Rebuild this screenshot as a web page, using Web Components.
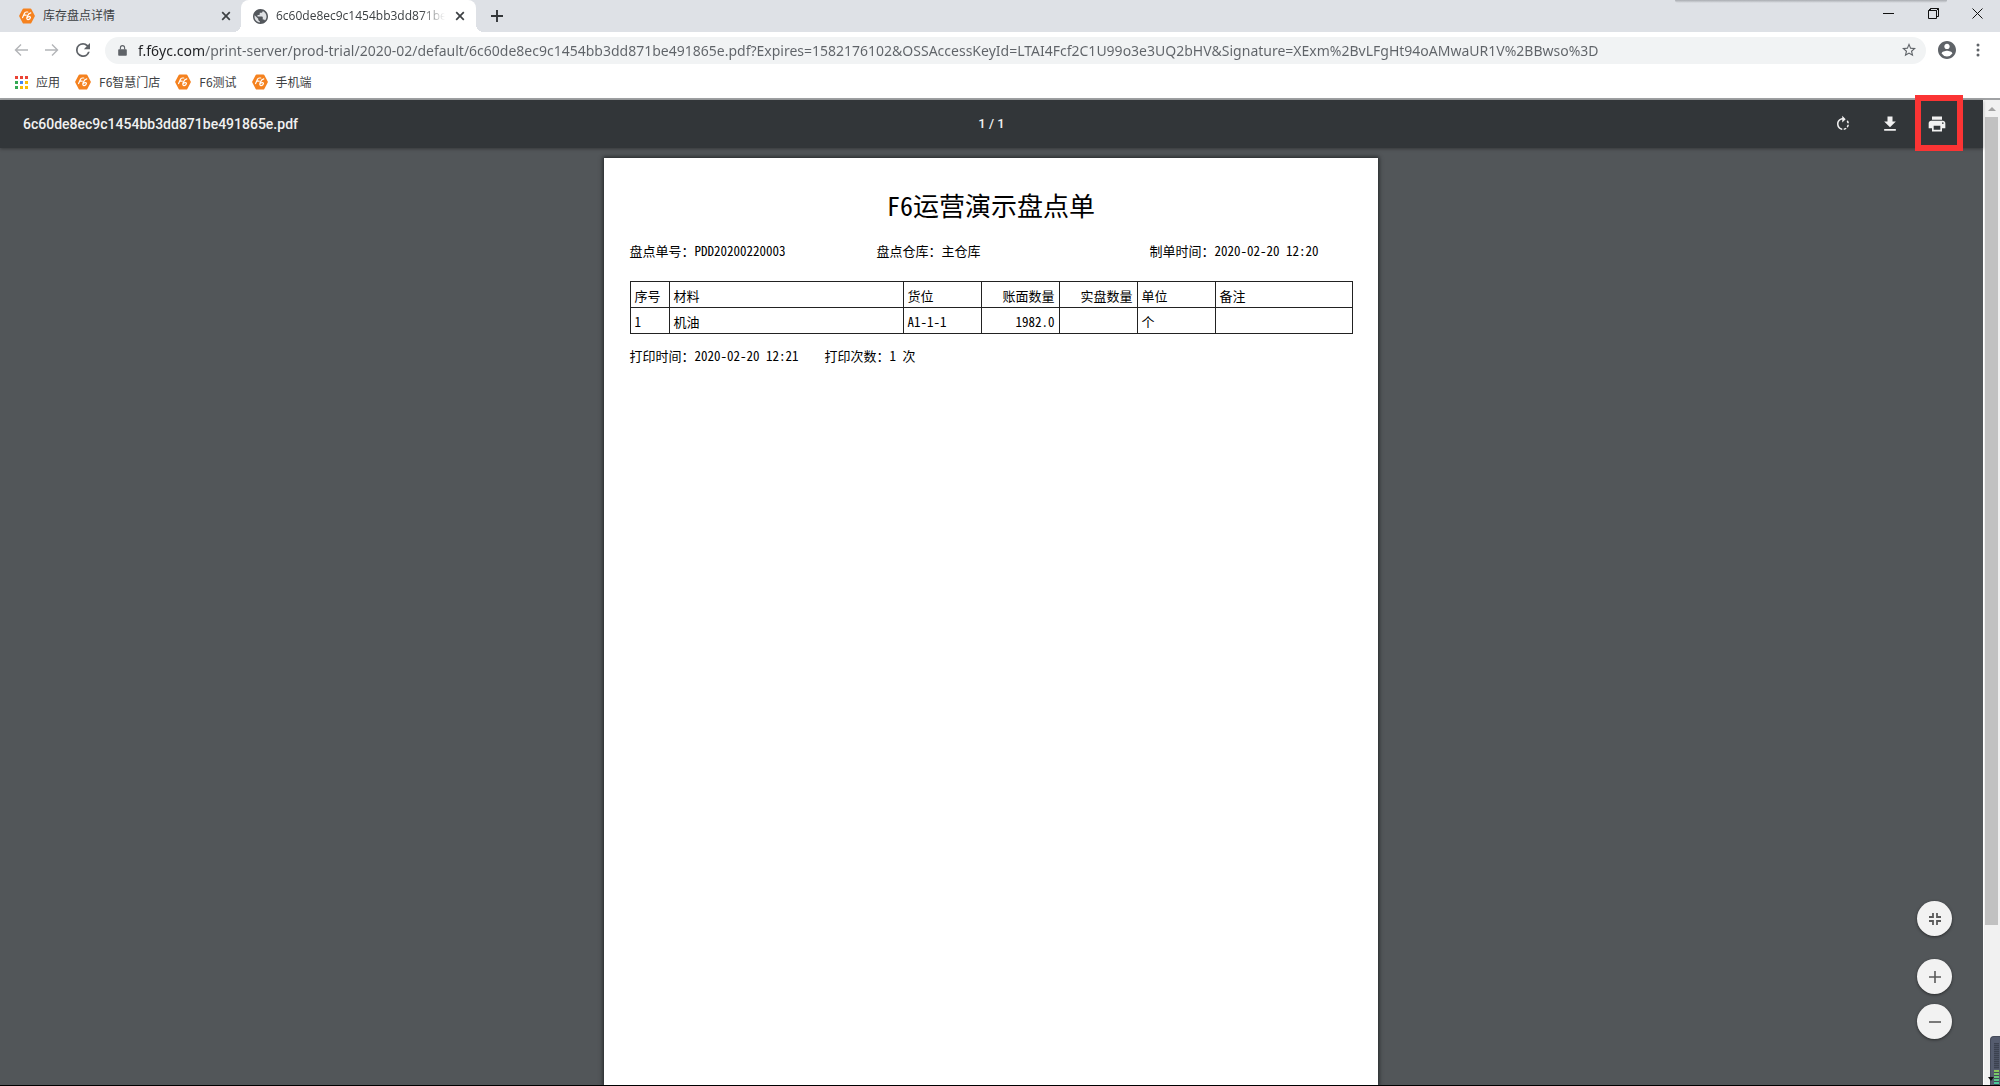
<!DOCTYPE html>
<html lang="zh-CN">
<head>
<meta charset="utf-8">
<title>6c60de8ec9c1454bb3dd871be491865e.pdf</title>
<style>
html, body { height: 100%; }
body { margin: 0; overflow: hidden; font-family: "Open Sans", "Noto Sans CJK SC", sans-serif; font-size: 12px; color: #3c4043; }
</style>
</head>
<body>
<browser-window></browser-window>
<script>
const F6 = `<svg viewBox="0 0 16 16" width="16" height="16" aria-hidden="true"><path fill="#f5821f" d="M4.6.4h6.8a1 1 0 0 1 .9.5l3.300 6.400a1.200 1.200 0 0 1 0 1.400l-3.300 6.400a1 1 0 0 1-.9.5H4.600a1 1 0 0 1-.9-.5L.4 8.700a1.200 1.200 0 0 1 0-1.400L3.700.9a1 1 0 0 1 .9-.5z"/><g fill="none" stroke="#fff" stroke-width="1.200" stroke-linecap="round" stroke-linejoin="round"><path d="M3.600 9.600 5.400 5.400C5.800 4.500 6.300 4.200 7.400 4h1.400M4.700 7.200h2.500"/><path d="M11.800 4.900c-1.700.4-2.900 1.800-3.700 3.800-.5 1.400-.4 2.800.8 2.900 1.200.1 2.300-.8 2.500-1.900.2-1.200-1.500-1.500-2.900-.4"/></g></svg>`;

function define(name, css, html) {
  const t = document.createElement('template');
  t.innerHTML = `<style>*,*::before,*::after{box-sizing:border-box}button{border:0;background:none;padding:0;margin:0;font:inherit;color:inherit;display:flex;align-items:center;justify-content:center;flex:none}svg{display:block;flex:none}${css}</style>${html}`;
  customElements.define(name, class extends HTMLElement {
    constructor() {
      super();
      this.attachShadow({ mode: 'open' }).append(t.content.cloneNode(true));
    }
  });
}

define('f6-logo', `:host{display:block;width:16px;height:16px;flex:none}`, F6);

define('browser-tab', `
:host{display:flex;align-items:center;height:32px;width:241px;padding:0 8px 0 19px;gap:8px;color:#3c4043;flex:none}
:host([active]){width:235px;padding:0 9px 0 12px;background:#fff;border-radius:8px 8px 0 0;position:relative}
:host([active])::before,:host([active])::after{content:"";position:absolute;bottom:0;width:8px;height:8px}
:host([active])::before{left:-8px;background:radial-gradient(circle at 0 0,transparent 8px,#fff 8px)}
:host([active])::after{right:-8px;background:radial-gradient(circle at 100% 0,transparent 8px,#fff 8px)}
.t{flex:1;min-width:0;overflow:hidden;white-space:nowrap;line-height:18px}
:host([active]) .t{-webkit-mask-image:linear-gradient(to right,#000 calc(100% - 24px),transparent)}
button{width:14px;height:16px;color:#3c4043}
`, `<slot name="icon"></slot><span class="t"><slot></slot></span><button aria-label="关闭"><svg width="10" height="10" viewBox="0 0 10 10"><path d="M1.200 1.200l7.600 7.600M8.800 1.200 1.200 8.800" stroke="currentColor" stroke-width="1.700"/></svg></button>`);

define('tab-strip', `
:host{display:flex;height:32px;background:#dee1e6;position:relative;padding-right:1px;box-sizing:border-box}
.new{width:28px;height:32px;margin-left:7px}
.win{margin-left:auto;display:flex}
.win button{width:45px;height:27px;color:#111}
.win button:last-child{width:43px}
.shade{position:absolute;right:53px;top:0;width:272px;height:3px;background:linear-gradient(#a9acb1,#dee1e6);border-radius:0 0 4px 4px}
`, `<browser-tab><f6-logo slot="icon"></f6-logo>库存盘点详情</browser-tab>
<browser-tab active><svg slot="icon" width="15" height="15" viewBox="2 2 20 20" style="display:block;flex:none" aria-hidden="true"><circle cx="12" cy="12" r="9.200" fill="#dfe1e4"/><path fill="#53575c" d="M12 2C6.480 2 2 6.480 2 12s4.480 10 10 10 10-4.480 10-10S17.520 2 12 2zm-1 17.930c-3.950-.49-7-3.850-7-7.930 0-.62.080-1.210.21-1.790L9 15v1c0 1.100.9 2 2 2v1.930zm6.900-2.540c-.26-.81-1-1.390-1.900-1.390h-1v-3c0-.55-.45-1-1-1H8v-2h2c.55 0 1-.45 1-1V7h2c1.100 0 2-.9 2-2v-.41c2.930 1.190 5 4.060 5 7.410 0 2.080-.8 3.970-2.100 5.390z"/></svg>6c60de8ec9c1454bb3dd871be491865e.pdf</browser-tab>
<button class="new" aria-label="新标签页"><svg width="12" height="12" viewBox="0 0 12 12"><path d="M6 0v12M0 6h12" stroke="#333639" stroke-width="1.900"/></svg></button>
<div class="win"><button aria-label="最小化"><svg width="11" height="11" viewBox="0 0 11 11"><path d="M0 5.500h11" stroke="currentColor"/></svg></button>
<button aria-label="还原"><svg width="11" height="11" viewBox="0 0 11 11"><path d="M.5 2.500h8v8h-8zM2.500 2.500v-2h8v8h-2M8.500 2.500l2-2M.5 2.500l2-2" fill="none" stroke="currentColor"/></svg></button>
<button aria-label="关闭窗口"><svg width="11" height="11" viewBox="0 0 11 11"><path d="M.5.5l10 10M10.500.5l-10 10" stroke="currentColor"/></svg></button></div>
<div class="shade"></div>`);

define('address-bar', `
:host{display:flex;align-items:center;height:36px;background:#fff;padding:0 19px 0 14px;color:#5f6368}
.nav{width:31px;height:28px;justify-content:flex-start}
.nav.off{color:#b3b5b8}
.pill{flex:1;min-width:0;display:flex;align-items:center;height:27px;border-radius:14px;background:#f1f3f4;padding:0 10px 0 13px;gap:11px;margin:0 12px 0 -2px}
input{flex:1;min-width:0;border:0;outline:0;margin:0;padding:0;height:24px;font:14px "Noto Sans",sans-serif;color:#5f6368;background:linear-gradient(to right,#202124 67px,#5f6368 67px);-webkit-background-clip:text;background-clip:text;-webkit-text-fill-color:transparent}
.menu{width:6px;margin-left:19px}
`, `<button class="nav off" aria-label="后退"><svg width="14" height="12" viewBox="0 0 14 12"><path d="M14 6H1.500M7 .6 1.500 6 7 11.400" fill="none" stroke="currentColor" stroke-width="1.400"/></svg></button>
<button class="nav off" aria-label="前进"><svg width="14" height="12" viewBox="0 0 14 12"><path d="M0 6h12.500M7 .6 12.500 6 7 11.400" fill="none" stroke="currentColor" stroke-width="1.400"/></svg></button>
<button class="nav" aria-label="重新加载"><svg width="14" height="14" viewBox="4 4 16 16"><path fill="currentColor" d="M17.650 6.350A7.960 7.960 0 0 0 12 4a8 8 0 1 0 7.730 10h-2.080A6 6 0 1 1 12 6c1.660 0 3.140.69 4.220 1.780L13 11h7V4l-2.350 2.350z"/></svg></button>
<div class="pill"><svg width="9" height="11" viewBox="0 0 9 11" aria-hidden="true"><path fill="#5f6368" d="M1 4.200h7a.8.8 0 0 1 .8.8v5a.8.8 0 0 1-.8.8H1a.8.8 0 0 1-.8-.8V5a.8.800 0 0 1 .8-.8z"/><path d="M2.400 4.500V2.700a2.100 2.100 0 0 1 4.200 0v1.800" fill="none" stroke="#5f6368" stroke-width="1.100"/></svg>
<input type="text" aria-label="地址" value="f.f6yc.com/print-server/prod-trial/2020-02/default/6c60de8ec9c1454bb3dd871be491865e.pdf?Expires=1582176102&amp;OSSAccessKeyId=LTAI4Fcf2C1U99o3e3UQ2bHV&amp;Signature=XExm%2BvLFgHt94oAMwaUR1V%2BBwso%3D">
<button aria-label="收藏"><svg width="14" height="14" viewBox="2 2 20 20"><path fill="#5f6368" d="M22 9.240l-7.190-.62L12 2 9.190 8.630 2 9.240l5.460 4.730L5.820 21 12 17.270 18.180 21l-1.630-7.030L22 9.240zM12 15.400l-3.760 2.270 1-4.280-3.320-2.880 4.380-.38L12 6.100l1.710 4.040 4.380.38-3.320 2.880 1 4.280L12 15.400z"/></svg></button></div>
<button aria-label="用户"><svg width="18" height="18" viewBox="2 2 20 20"><path fill="currentColor" d="M12 2C6.480 2 2 6.480 2 12s4.480 10 10 10 10-4.480 10-10S17.520 2 12 2zm0 3c1.660 0 3 1.340 3 3s-1.340 3-3 3-3-1.340-3-3 1.340-3 3-3zm0 14.200a7.200 7.200 0 0 1-6-3.220c.03-1.990 4-3.080 6-3.080 1.990 0 5.970 1.090 6 3.080a7.200 7.200 0 0 1-6 3.220z"/></svg></button>
<button class="menu" aria-label="菜单"><svg width="4" height="14" viewBox="0 0 4 14"><g fill="currentColor"><circle cx="2" cy="2" r="1.500"/><circle cx="2" cy="7" r="1.500"/><circle cx="2" cy="12" r="1.500"/></g></svg></button>`);

define('bookmark-link', `:host{display:block;flex:none}
a{display:flex;align-items:center;gap:8px;color:#3c4043;text-decoration:none;line-height:18px;white-space:nowrap;font-family:"Noto Sans CJK SC",sans-serif}`,
`<a href="#"><slot name="icon"></slot><slot></slot></a>`);

define('bookmark-bar', `:host{display:flex;align-items:center;gap:15px;height:30px;padding:0 15px 2px;background:#fff;box-sizing:border-box}`,
`<bookmark-link><svg slot="icon" width="13" height="13" viewBox="0 0 13 13" style="display:block" aria-hidden="true"><g fill="#ea4335"><path d="M0 0h3v3H0zM5 0h3v3H5zM10 0h3v3h-3z"/></g><path fill="#34a853" d="M0 5h3v3H0zM0 10h3v3H0z"/><path fill="#4285f4" d="M5 5h3v3H5z"/><path fill="#fbbc05" d="M10 5h3v3h-3zM5 10h3v3H5zM10 10h3v3h-3z"/></svg>应用</bookmark-link>
<bookmark-link><f6-logo slot="icon"></f6-logo>F6智慧门店</bookmark-link>
<bookmark-link><f6-logo slot="icon"></f6-logo>F6测试</bookmark-link>
<bookmark-link><f6-logo slot="icon"></f6-logo>手机端</bookmark-link>`);

define('pdf-toolbar', `
:host{display:grid;grid-template-columns:1fr auto 1fr;align-items:center;height:48px;background:#323639;color:#f1f1f1;font:13px/20px Roboto,sans-serif;padding:0 36px 0 23px;box-shadow:0 1px 3px rgba(0,0,0,.35);position:relative;z-index:2}
b{font-size:14px;font-weight:500}
.page{padding-left:13px;font-weight:500}
.acts{display:flex;justify-content:flex-end;gap:27px}
.acts button{width:20px;height:20px;position:relative}
.print::after{content:"";position:absolute;left:-12px;top:-19px;width:48px;height:56px;border:6px solid #fb3434}
`, `<b>6c60de8ec9c1454bb3dd871be491865e.pdf</b><span class="page">1 / 1</span>
<div class="acts"><button aria-label="旋转"><svg width="18" height="18" viewBox="0 0 24 24"><path fill="currentColor" d="M15.550 5.550 11 1v3.070C7.060 4.560 4 7.920 4 12s3.050 7.440 7 7.930v-2.020c-2.840-.48-5-2.940-5-5.910s2.160-5.430 5-5.910V10l4.550-4.450zM19.930 11a7.900 7.900 0 0 0-1.620-3.890l-1.420 1.420c.54.75.88 1.600 1.020 2.470h2.020zM13 17.900v2.020a7.920 7.920 0 0 0 3.900-1.610l-1.440-1.440c-.75.54-1.590.89-2.460 1.030zm3.890-2.420 1.420 1.410A7.900 7.900 0 0 0 19.930 13h-2.020a5.900 5.900 0 0 1-1.020 2.480z"/></svg></button>
<button aria-label="下载"><svg width="20" height="20" viewBox="0 0 24 24"><path fill="currentColor" d="M19 9h-4V3H9v6H5l7 7 7-7zM5 18v2h14v-2H5z"/></svg></button>
<button class="print" aria-label="打印"><svg width="20" height="20" viewBox="0 0 24 24"><path fill="currentColor" d="M19 8H5c-1.660 0-3 1.340-3 3v6h4v4h12v-4h4v-6c0-1.660-1.340-3-3-3zm-3 11H8v-5h8v5zm3-7c-.55 0-1-.45-1-1s.45-1 1-1 1 .45 1 1-.45 1-1 1zm-1-9H6v4h12V3z"/></svg></button></div>`);

define('stock-sheet', `
:host{display:block;box-sizing:border-box;width:774px;padding:0 25px 0 26px;background:#fff;color:#000;box-shadow:0 0 4px 1px #222527;font:13px/20px "Noto Sans Mono CJK SC","Noto Sans CJK SC",monospace}
h1{margin:0;padding:29px 0 18px;text-align:center;font-weight:400;font-size:26px;line-height:36px}
.meta{display:grid;grid-template-columns:247px 273px 1fr;line-height:20px;padding:0 0 20px}
table{width:100%;border-collapse:collapse;table-layout:fixed}
th,td{border:1px solid #222;height:26px;padding:2px 4px 0;text-align:left;font-weight:400;line-height:20px;white-space:nowrap}
.n{text-align:right}
.foot{display:flex;gap:26px;padding-top:12px}
`, `<h1>F6运营演示盘点单</h1>
<div class="meta"><span>盘点单号：PDD20200220003</span><span>盘点仓库：主仓库</span><span>制单时间：2020-02-20 12:20</span></div>
<table><colgroup><col style="width:39px"><col style="width:234px"><col style="width:78px"><col style="width:78px"><col style="width:78px"><col style="width:78px"><col></colgroup>
<thead><tr><th>序号</th><th>材料</th><th>货位</th><th class="n">账面数量</th><th class="n">实盘数量</th><th>单位</th><th>备注</th></tr></thead>
<tbody><tr><td>1</td><td>机油</td><td>A1-1-1</td><td class="n">1982.0</td><td class="n"></td><td>个</td><td></td></tr></tbody></table>
<div class="foot"><span>打印时间：2020-02-20 12:21</span><span>打印次数：1 次</span></div>`);

define('zoom-controls', `
:host{position:absolute;right:31px;bottom:46px;display:flex;flex-direction:column;gap:10px}
button{width:35px;height:35px;border-radius:50%;background:#f2f2f2;color:#5a5a5a;box-shadow:0 1px 3px rgba(0,0,0,.5)}
.fit{margin-bottom:13px}
`, `<button class="fit" aria-label="适合页面"><svg width="12" height="12" viewBox="0 0 12 12"><path d="M4 0v4H0M8 0v4h4M4 12V8H0M8 12V8h4" fill="none" stroke="currentColor" stroke-width="1.800"/></svg></button>
<button aria-label="放大"><svg width="12" height="12" viewBox="0 0 12 12"><path d="M6 0v12M0 6h12" stroke="currentColor" stroke-width="1.600"/></svg></button>
<button aria-label="缩小"><svg width="12" height="12" viewBox="0 0 12 12"><path d="M0 6h12" stroke="currentColor" stroke-width="1.600"/></svg></button>`);

define('scroll-rail', `
:host{display:flex;flex-direction:column;align-items:center;width:17px;background:#f1f1f1;border-left:1px solid #fff;position:relative;padding-right:1px;box-sizing:border-box}
.up{height:17px;width:100%;display:flex;align-items:center;justify-content:center}
.thumb{width:13px;height:82%;background:#c1c1c1}
.meter{position:absolute;right:0;bottom:0;width:10px;height:49px;border-radius:4px 0 0 0;background:#555c6e;border:1px solid #454b5a;border-right:0;border-bottom:0}
.meter i{position:absolute;right:1px;width:5px}
.a{top:6px;height:26px;background:repeating-linear-gradient(#3c4250 0 1px,#4b5263 1px 2px)}
.b{top:33px;height:15px;background:repeating-linear-gradient(transparent 0 2px,#454b5a 2px 3px),linear-gradient(#8fc653,#3fc9a5)}
.meter svg{position:absolute;left:-3px;bottom:4px}
`, `<div class="up"><svg width="8" height="4" viewBox="0 0 8 4"><path d="M4 0l4 4H0z" fill="#a3a3a3"/></svg></div><div class="thumb"></div>
<div class="meter"><i class="a"></i><i class="b"></i><svg width="6" height="4" viewBox="0 0 6 4"><path d="M0 0h6L3 4z" fill="#111"/></svg></div>`);

define('pdf-viewer', `
:host{display:flex;flex:1;min-height:0;border-top:2px solid #a0a2a4;background:#525659}
main{flex:1;min-width:0;display:flex;flex-direction:column;position:relative}
.canvas{flex:1;min-height:0;display:flex;justify-content:center;padding:10px 2px 0 0;overflow:hidden}
`, `<main><pdf-toolbar></pdf-toolbar><div class="canvas"><stock-sheet></stock-sheet></div><zoom-controls></zoom-controls></main><scroll-rail></scroll-rail>`);

define('browser-window', `:host{display:flex;flex-direction:column;height:100vh;border-bottom:1px solid #000;background:#fff;box-sizing:border-box}`,
`<tab-strip></tab-strip><address-bar></address-bar><bookmark-bar></bookmark-bar><pdf-viewer></pdf-viewer>`);
</script>
</body>
</html>
